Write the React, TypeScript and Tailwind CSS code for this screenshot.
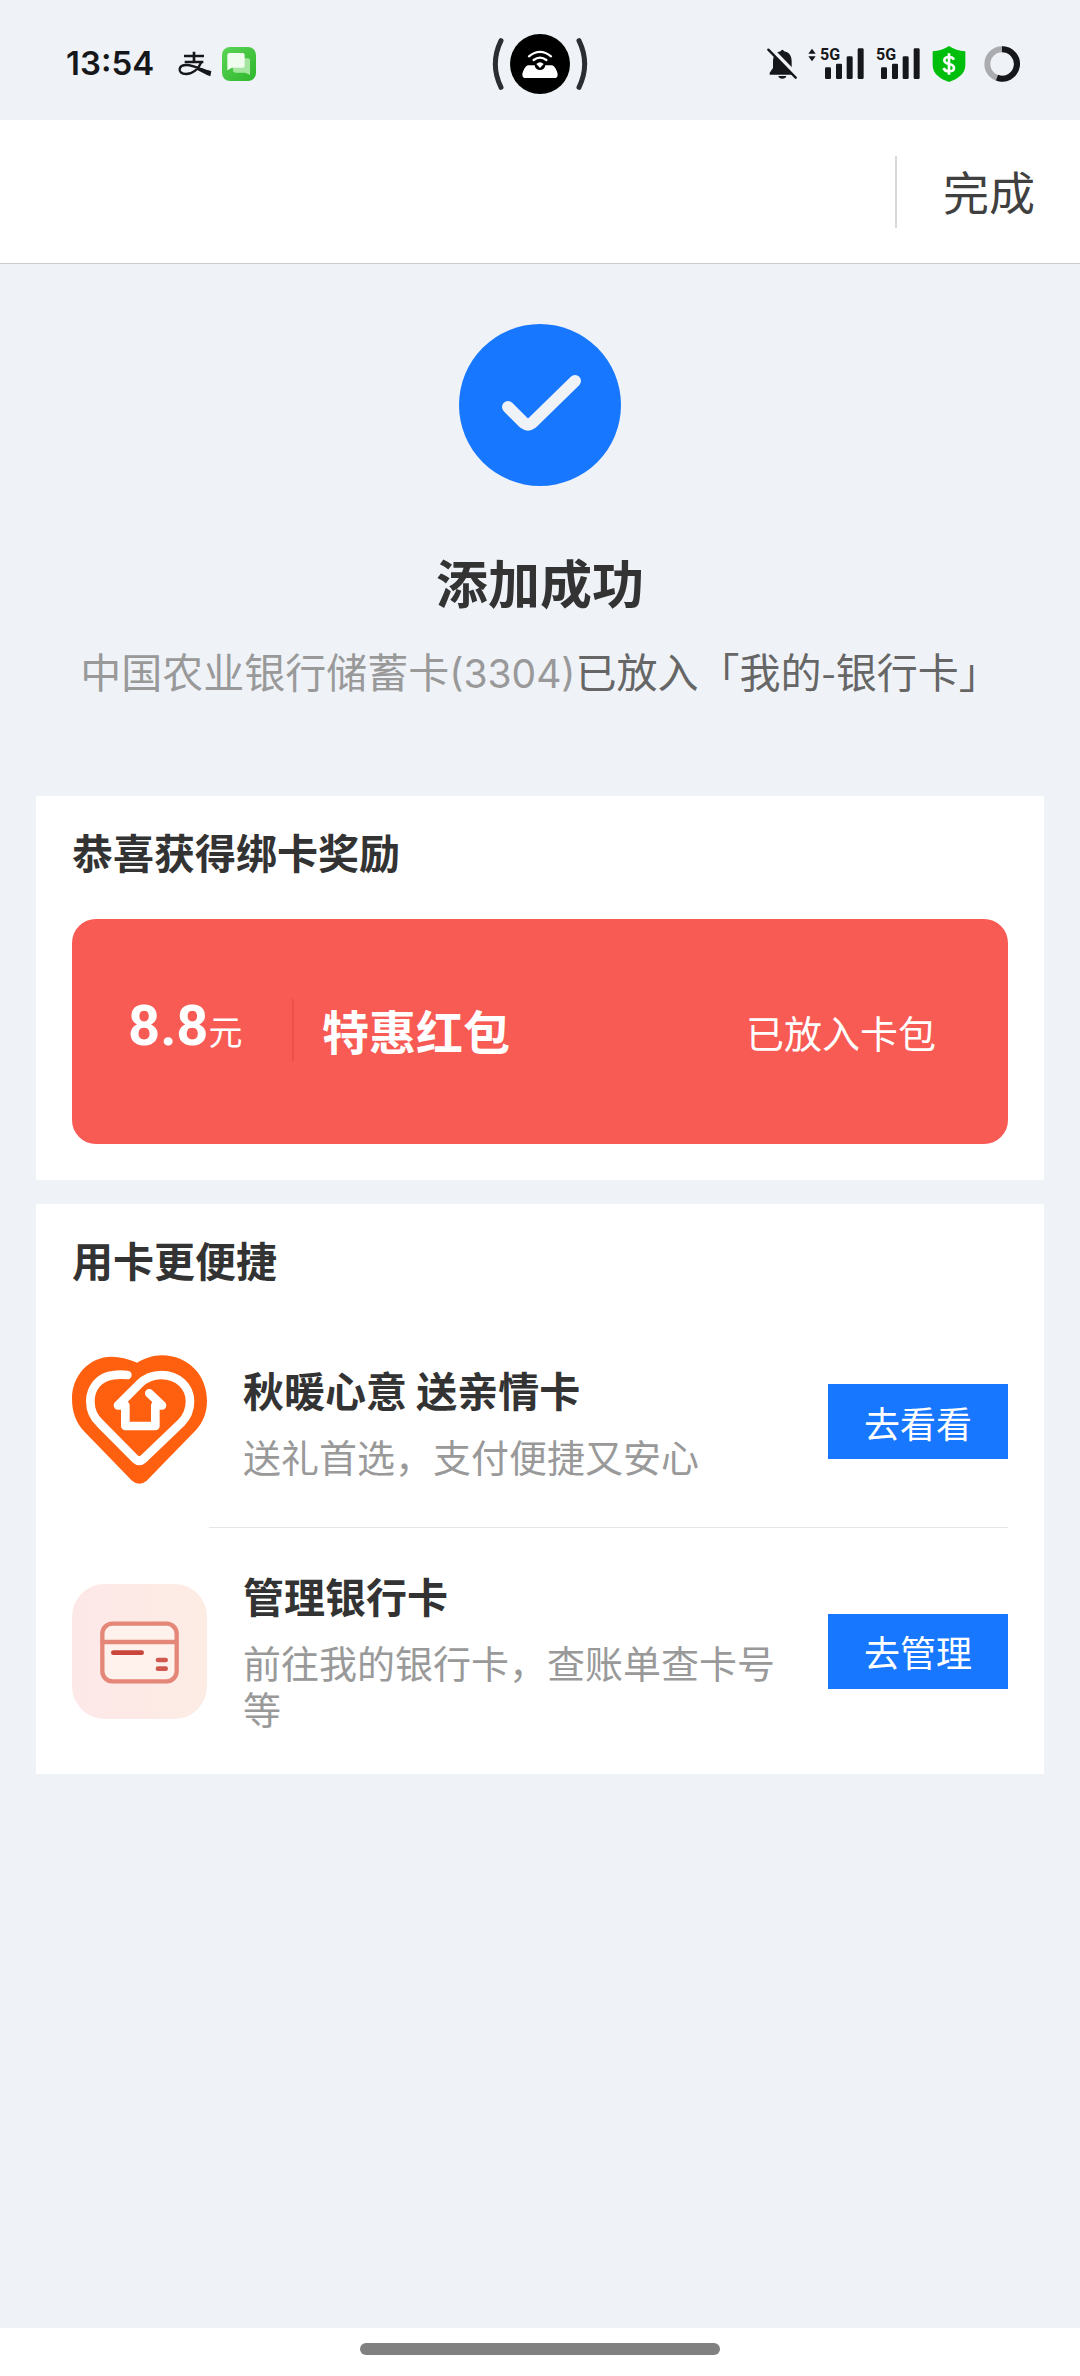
import React from "react";

function AlipayMark() {
  return (
    <svg className="h-[26px] w-[34px]" viewBox="0 0 102 78" fill="none" stroke="#15171a" aria-hidden="true">
      <path d="M18 15H78M48 2V31M20 33H76" strokeWidth="8" />
      <path d="M70 33C62 54 44 69 24 69C10 69 4 62 5 54C6 46 14 42 26 42C46 42 68 55 98 64" strokeWidth="7" />
      <path d="M60 49C74 55 86 59 100 60L97 76C84 71 70 63 56 56Z" fill="#15171a" stroke="none" />
    </svg>
  );
}

function ChatAppIcon() {
  return (
    <svg className="size-[34px]" viewBox="0 0 102 102" aria-hidden="true">
      <defs>
        <linearGradient id="chatGreen" x1="0" y1="0" x2="1" y2="1">
          <stop offset="0" stopColor="#5bd556" />
          <stop offset="1" stopColor="#2fb62c" />
        </linearGradient>
      </defs>
      <rect width="102" height="102" rx="24" fill="url(#chatGreen)" />
      <path d="M38 34H78Q84 34 84 40V84L70 77H40Q33 77 33 70V40Z" fill="#a4e6a0" />
      <path d="M22 18H62Q68 18 68 24V56Q68 62 62 62H30L16 70V24Q16 18 22 18Z" fill="#effcee" />
    </svg>
  );
}

function HotspotIcon() {
  return (
    <svg className="h-[60px] w-[96px]" viewBox="0 0 288 180" fill="none" aria-hidden="true">
      <circle cx="144" cy="90" r="90" fill="#000" />
      <path d="M27 20Q-7 90 27 160M261 20Q295 90 261 160" stroke="#2a2d31" strokeWidth="15" strokeLinecap="round" />
      <path d="M108 94H180C190 96 197 116 197 122Q197 132 187 132H101Q91 132 91 122C91 116 98 96 108 94Z" fill="#fff" />
      <circle cx="144" cy="92" r="16" fill="#000" />
      <path d="M133 90Q144 79 155 90L144 102Z" fill="#fff" />
      <path d="M125 78Q144 64 163 78M111 67Q144 40 177 67" stroke="#fff" strokeWidth="7" strokeLinecap="round" />
    </svg>
  );
}

function MutedBellIcon() {
  return (
    <svg className="h-[32px] w-[30px]" viewBox="0 0 90 96" aria-hidden="true">
      <path d="M46 5Q50 5 51 10C68 13 74 26 74 40V58L82 72V80H8V74L18 60V40C18 24 27 12 41 10Q42 5 46 5Z" fill="#15171a" />
      <path d="M34 84H58Q56 92 46 92Q36 92 34 84Z" fill="#15171a" />
      <path d="M10 0L94 86" stroke="#eff3f8" strokeWidth="12" />
      <path d="M4 5L86 89" stroke="#15171a" strokeWidth="7" strokeLinecap="round" />
    </svg>
  );
}

function DataArrowsIcon() {
  return (
    <svg className="h-[14px] w-[8px]" viewBox="0 0 24 42" fill="#15171a" aria-hidden="true">
      <path d="M12 2L23 17H1ZM12 40L1 25H23Z" />
    </svg>
  );
}

function Signal() {
  return (
    <div className="relative h-[32px] w-[44px]">
      <svg className="h-full w-full" viewBox="0 0 132 96" fill="#15171a" aria-hidden="true">
        <rect x="15" y="58" width="18" height="35" rx="4" />
        <rect x="48" y="47" width="18" height="46" rx="4" />
        <rect x="80" y="25" width="18" height="68" rx="4" />
        <rect x="113" y="1" width="18" height="92" rx="4" />
      </svg>
      <span className="absolute left-0 top-0 font-['Roboto',sans-serif] text-[16px] font-bold leading-[14px] text-[#15171a]">
        5G
      </span>
    </div>
  );
}

function PayShieldIcon() {
  return (
    <svg className="h-[36px] w-[34px]" viewBox="0 0 102 108" aria-hidden="true">
      <path d="M51 0Q72 14 100 16V58C100 84 76 100 51 108C26 100 2 84 2 58V16Q30 14 51 0Z" fill="#00bf0c" />
      <path d="M66 41Q62 33 51 33Q37 33 37 43Q37 51 51 54Q66 57 66 66Q66 76 51 76Q38 76 35 66M51 22V86" fill="none" stroke="#fff" strokeWidth="8" />
    </svg>
  );
}

function BatteryRing() {
  return (
    <svg className="size-[36px]" viewBox="0 0 108 108" fill="none" strokeWidth="18" aria-hidden="true">
      <circle cx="54" cy="54" r="44" stroke="#aaacb0" />
      <path d="M54 10A44 44 0 1 1 39 95" stroke="#15171a" />
    </svg>
  );
}

function StatusBar() {
  return (
    <div className="grid h-[120px] grid-cols-[1fr_auto_1fr] items-center px-[60px] pt-2">
      <div className="flex items-center pl-1.5">
        <span className="font-['Inter',sans-serif] text-[33px] font-semibold text-[#15171a]">13:54</span>
        <div className="ml-6 flex items-center gap-[10px]">
          <AlipayMark />
          <ChatAppIcon />
        </div>
      </div>
      <HotspotIcon />
      <div className="flex items-center justify-end">
        <MutedBellIcon />
        <div className="ml-[11px] flex items-start gap-1">
          <DataArrowsIcon />
          <Signal />
        </div>
        <div className="ml-3">
          <Signal />
        </div>
        <div className="ml-3 flex items-center gap-[18px]">
          <PayShieldIcon />
          <BatteryRing />
        </div>
      </div>
    </div>
  );
}

function SuccessIcon() {
  return (
    <svg className="size-[162px]" viewBox="0 0 162 162" fill="none" aria-hidden="true">
      <circle cx="81" cy="81" r="81" fill="#1777ff" />
      <path d="M49 83L65 99Q69 102 73 99L116 57" stroke="#eff3f8" strokeWidth="12" strokeLinecap="round" strokeLinejoin="round" />
    </svg>
  );
}

function FamilyCardIcon() {
  return (
    <svg className="size-[135px] shrink-0" viewBox="36 44 405 405" aria-hidden="true">
      <path
        d="M232 70C205 58 178 52 155 52C88 52 36 108 36 178C36 218 48 250 72 276L216 424Q238 442 260 424L408 272C430 248 441 218 441 184C441 108 384 48 306 48C278 48 252 58 232 70Z"
        fill="#ff6010"
      />
      <path
        d="M202 107C185 105 168 106 158 108C118 112 91 146 91 186C91 214 102 236 120 252L226 359Q238 370 250 359L364 250C382 232 390 212 390 186C390 142 354 107 304 107C276 107 256 116 238 134L174 198H196V260H286V198H306L268 162"
        fill="none"
        stroke="#fff"
        strokeWidth="26"
        strokeLinecap="round"
        strokeLinejoin="round"
      />
    </svg>
  );
}

function BankCardIcon() {
  return (
    <svg className="size-[135px] shrink-0" viewBox="36 71 405 405" fill="none" strokeLinecap="round" aria-hidden="true">
      <defs>
        <linearGradient id="cardTile" x1="0" y1="0" x2="1" y2="0">
          <stop offset="0" stopColor="#fde8e8" />
          <stop offset="1" stopColor="#fdece4" />
        </linearGradient>
      </defs>
      <rect x="36" y="71" width="405" height="405" rx="98" fill="url(#cardTile)" />
      <rect x="127" y="190" width="223" height="173" rx="30" fill="#fff1eb" stroke="#e58778" strokeWidth="13" />
      <path d="M127 245H350" stroke="#e58778" strokeWidth="13" />
      <path d="M160 277H245" stroke="#c9463d" strokeWidth="14" />
      <path d="M294 299H317M294 325H317" stroke="#cf594e" strokeWidth="14" />
    </svg>
  );
}

const services = [
  {
    title: "秋暖心意 送亲情卡",
    text: "送礼首选，支付便捷又安心",
    action: "去看看",
    icon: <FamilyCardIcon />,
  },
  {
    title: "管理银行卡",
    text: "前往我的银行卡，查账单查卡号等",
    action: "去管理",
    icon: <BankCardIcon />,
  },
];

export default function App() {
  return (
    <div className="flex min-h-screen flex-col bg-[#eff3f8] font-['Noto_Sans_CJK_SC',sans-serif] text-[#333]">
      <StatusBar />

      <header className="flex h-36 items-center justify-end border-b border-[#c8cdd2] bg-white pr-[45px]">
        <div className="h-[72px] w-[2px] bg-[#d9d9d9]" />
        <button type="button" className="ml-[46px] pb-1 text-[46px] leading-[60px] text-[#404040]">
          完成
        </button>
      </header>

      <main className="flex-1 px-9 pt-[60px]">
        <section className="flex flex-col items-center">
          <SuccessIcon />
          <h1 className="mt-[64px] text-[52px] font-bold leading-[64px]">添加成功</h1>
          <p className="mt-[26px] whitespace-nowrap text-[41px] leading-[60px] text-[#666]">
            <span className="text-[#999]">
              中国农业银行储蓄卡<span className="font-['Inter',sans-serif] text-[39px] leading-none">(3304)</span>
            </span>
            已放入「我的-银行卡」
          </p>
        </section>

        <section className="mt-24 bg-white px-9 pb-9 pt-[31px]">
          <h2 className="text-[41px] font-bold leading-[48px]">恭喜获得绑卡奖励</h2>
          <div className="mt-[44px] flex h-[225px] items-center rounded-3xl bg-[#f85a54] pl-14 pr-[72px] text-white">
            <div className="flex items-center pb-1">
              <p className="flex w-[164px] items-baseline pb-2">
                <span className="font-['Roboto',sans-serif] text-[56px] font-bold leading-[64px]">8.8</span>
                <span className="text-[34px] leading-[48px]">元</span>
              </p>
              <div className="h-[62px] w-[2px] bg-[#ee4f4b]" />
              <h3 className="ml-7 text-[47px] font-bold leading-[60px]">特惠红包</h3>
            </div>
            <p className="ml-auto text-[38px] leading-[46px]">已放入卡包</p>
          </div>
        </section>

        <section className="mt-6 bg-white px-9 pt-[31px]">
          <h2 className="text-[41px] font-bold leading-[48px]">用卡更便捷</h2>
          <ul className="mt-8">
            {services.map((item) => (
              <li key={item.title} className="group relative flex items-center py-[43px] first:py-[39px]">
                {item.icon}
                <div className="ml-9 mr-9 min-w-0 flex-1">
                  <h3 className="text-[41px] font-bold leading-[48px]">{item.title}</h3>
                  <p className="mt-5 text-[38px] leading-[46px] text-[#999]">{item.text}</p>
                </div>
                <button type="button" className="h-[75px] w-[180px] shrink-0 bg-[#1777ff] text-[36px] leading-[48px] text-white">
                  {item.action}
                </button>
                <div className="absolute bottom-0 left-[137px] right-0 h-px bg-[#e5e5e5] group-last:hidden" />
              </li>
            ))}
          </ul>
        </section>
      </main>

      <footer className="flex h-12 items-start justify-center bg-white pt-[15px]">
        <div className="h-3 w-1/3 rounded-full bg-[#808080]" />
      </footer>
    </div>
  );
}
